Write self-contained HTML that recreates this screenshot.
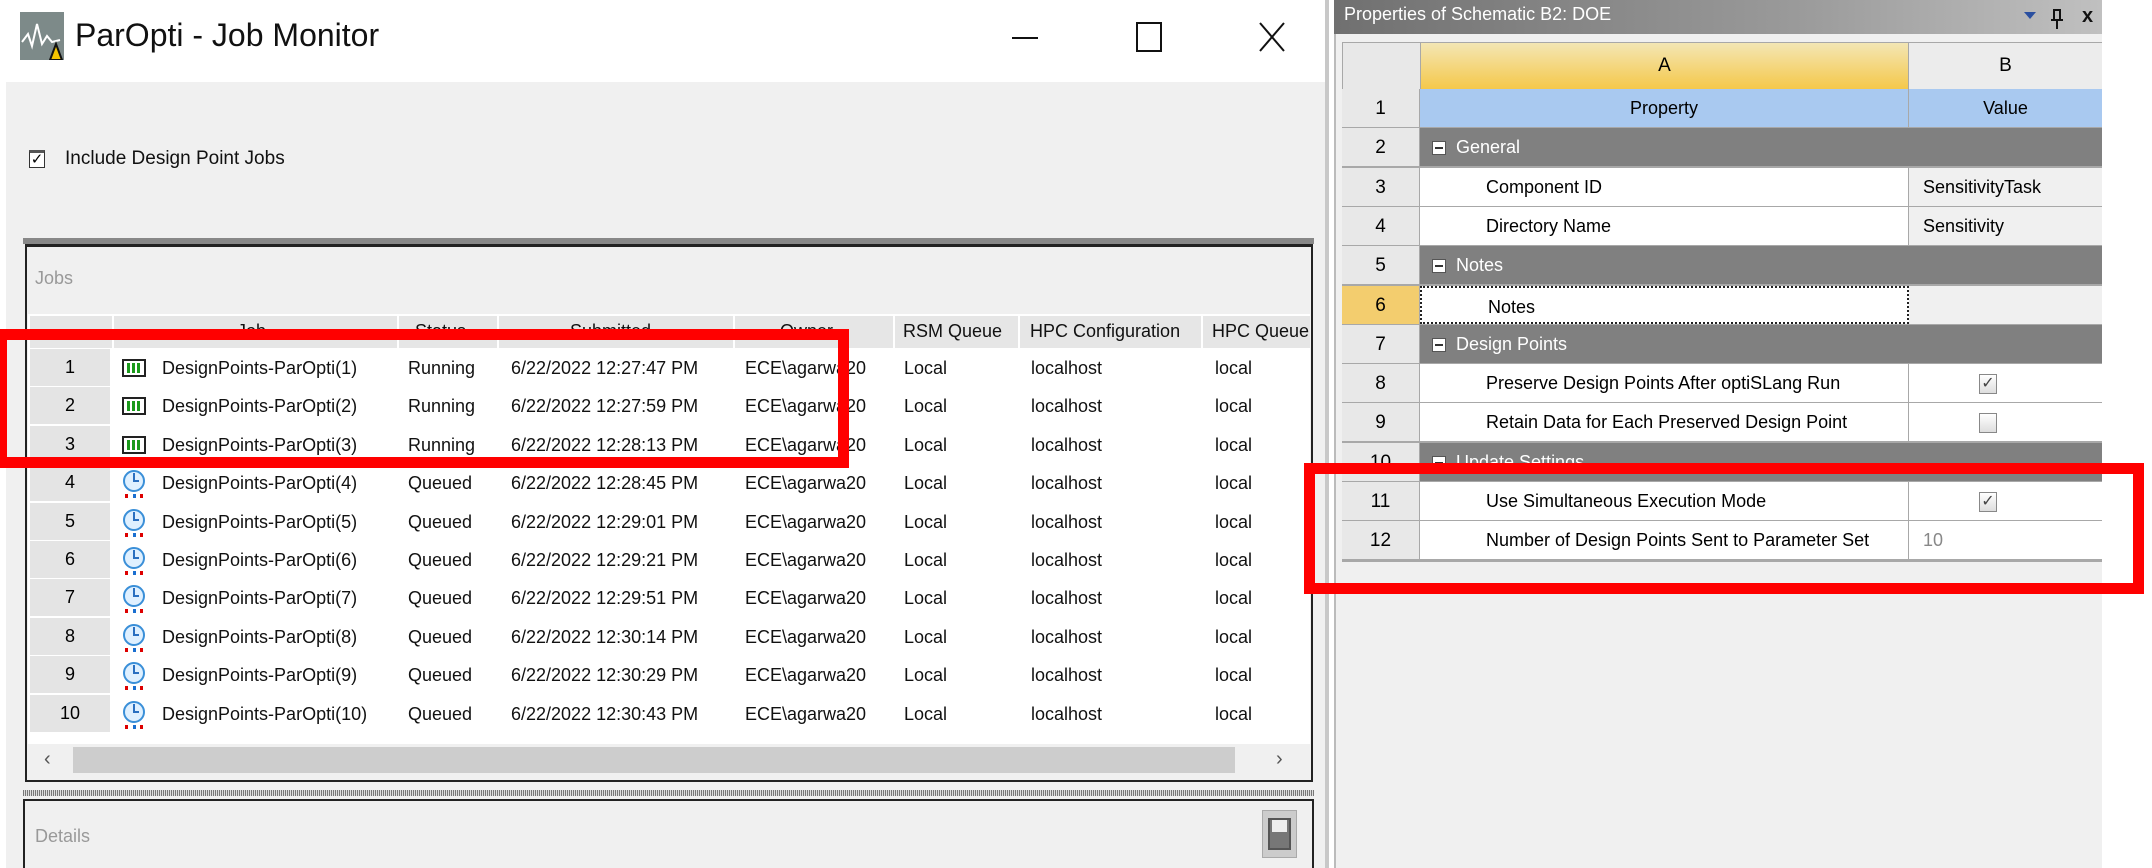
<!DOCTYPE html>
<html><head><meta charset="utf-8"><style>
*{margin:0;padding:0;box-sizing:border-box}
body{width:2152px;height:868px;overflow:hidden;background:#fff;font-family:"Liberation Sans",sans-serif;position:relative}
.a{position:absolute}
.t{position:absolute;font-size:18px;color:#111;white-space:nowrap;line-height:38px}
.rn{position:absolute;left:30px;width:80px;background:#e4e4e4;text-align:center;font-size:18px;line-height:37px;height:37px}
.pr{position:absolute;left:1342px;width:760px;height:39px;border-bottom:1px solid #a8a8a8}
.pr .n{position:absolute;left:0;width:78px;height:100%;background:#e8e8e8;border-right:1px solid #a8a8a8;text-align:center;font-size:19px;line-height:39px}
.pr .p{position:absolute;left:78px;width:489px;height:100%;background:#fff;border-right:1px solid #a8a8a8;font-size:18px;line-height:39px;padding-left:66px}
.pr .v{position:absolute;left:567px;right:0;height:100%;background:#fff;font-size:18px;line-height:39px;padding-left:14px}
.pr.g .p,.pr.g .v{background:#808080;color:#fff;border-right:none}
.pr.g .p{padding-left:36px}
.mb{position:absolute;left:12px;top:13px;width:14px;height:14px;background:#fff;border:1px solid #555}
.mb:after{content:"";position:absolute;left:2px;right:2px;top:5px;height:2px;background:#333}
.cb{position:absolute;left:70px;top:10px;width:18px;height:20px;border:1px solid #888;background:linear-gradient(#fff,#ddd);font-size:16px;line-height:18px;text-align:center;color:#444}
</style></head><body>
<div class="a" style="left:0;top:0;width:1328px;height:82px;background:#fff"></div>
<svg class="a" style="left:20px;top:12px" width="44" height="48"><rect width="44" height="48" fill="#7d8a89"/><polyline points="2,30 8,22 12,34 17,12 22,32 27,24 32,30 40,28" fill="none" stroke="#fff" stroke-width="2"/><polygon points="30,48 36,32 42,48" fill="#f5c400" stroke="#111" stroke-width="2"/></svg>
<div class="a" style="left:75px;top:17px;font-size:32px;color:#111">ParOpti - Job Monitor</div>
<div class="a" style="left:1012px;top:37px;width:26px;height:2px;background:#111"></div>
<div class="a" style="left:1136px;top:22px;width:26px;height:30px;border:2px solid #111"></div>
<svg class="a" style="left:1258px;top:22px" width="28" height="30"><path d="M2 1L26 29M26 1L2 29" stroke="#111" stroke-width="2"/></svg>
<div class="a" style="left:1325px;top:0;width:4px;height:868px;background:#c8c8c8"></div>
<div class="a" style="left:6px;top:82px;width:1319px;height:786px;background:#f0f0f0"></div>
<div class="a" style="left:29px;top:150px;width:16px;height:18px;border:1px solid #333;border-top:3px solid #555;background:#fff;font-size:15px;line-height:14px;text-align:center">✓</div>
<div class="a" style="left:65px;top:148px;font-size:19px;color:#111">Include Design Point Jobs</div>
<div class="a" style="left:23px;top:238px;width:1291px;height:6px;background:#888"></div>
<div class="a" style="left:25px;top:244px;width:1288px;height:538px;border:2px solid #222;border-top:3px solid #222;background:#f0f0f0"></div>
<div class="a" style="left:35px;top:268px;font-size:18px;color:#999">Jobs</div>
<div class="a" style="left:28px;top:314px;width:1282px;height:430px;background:#fff"></div>
<div class="a" style="left:30px;top:316px;width:1280px;height:32px;background:#e6e6e6"></div>
<div class="a" style="left:112px;top:316px;width:2px;height:32px;background:#fff"></div>
<div class="a" style="left:397px;top:316px;width:2px;height:32px;background:#fff"></div>
<div class="a" style="left:497px;top:316px;width:2px;height:32px;background:#fff"></div>
<div class="a" style="left:733px;top:316px;width:2px;height:32px;background:#fff"></div>
<div class="a" style="left:893px;top:316px;width:2px;height:32px;background:#fff"></div>
<div class="a" style="left:1018px;top:316px;width:2px;height:32px;background:#fff"></div>
<div class="a" style="left:1201px;top:316px;width:2px;height:32px;background:#fff"></div>
<div class="t" style="left:237px;top:314px;line-height:34px">Job</div>
<div class="t" style="left:415px;top:314px;line-height:34px">Status</div>
<div class="t" style="left:570px;top:314px;line-height:34px">Submitted</div>
<div class="t" style="left:780px;top:314px;line-height:34px">Owner</div>
<div class="t" style="left:903px;top:314px;line-height:34px">RSM Queue</div>
<div class="t" style="left:1030px;top:314px;line-height:34px">HPC Configuration</div>
<div class="t" style="left:1212px;top:314px;line-height:34px">HPC Queue</div>
<div id="rows"></div>
<div class="a" style="left:30px;top:745px;width:1280px;height:30px;background:#f0f0f0"></div>
<div class="a" style="left:73px;top:747px;width:1162px;height:26px;background:#cdcdcd"></div>
<div class="a" style="left:44px;top:748px;font-size:20px;color:#555">‹</div>
<div class="a" style="left:1276px;top:748px;font-size:20px;color:#555">›</div>
<div class="a" style="left:23px;top:790px;width:1291px;height:6px;background:repeating-linear-gradient(90deg,#777 0 1px,#ddd 1px 2px)"></div>
<div class="a" style="left:23px;top:799px;width:1291px;height:69px;border:2px solid #222;border-bottom:none;background:#f0f0f0"></div>
<div class="a" style="left:35px;top:826px;font-size:18px;color:#999">Details</div>
<div class="a" style="left:1262px;top:810px;width:35px;height:48px;background:#ccc;border:1px solid #aaa"></div>
<div class="a" style="left:1268px;top:818px;width:23px;height:32px;background:#777;border:2px solid #555"></div>
<div class="a" style="left:1272px;top:820px;width:15px;height:12px;background:#eee"></div>
<div class="a" style="left:1334px;top:0;width:768px;height:868px;background:#f0f0f0;border-left:2px solid #bbb"></div>
<div class="a" style="left:1334px;top:0;width:768px;height:34px;background:linear-gradient(90deg,#707070,#9a9a9a 60%,#c0c0c0)"></div>
<div class="a" style="left:1344px;top:4px;font-size:18px;color:#fff">Properties of Schematic B2: DOE</div>
<div class="a" style="left:2024px;top:12px;width:0;height:0;border-left:6px solid transparent;border-right:6px solid transparent;border-top:7px solid #2a4fa0"></div>
<svg class="a" style="left:2050px;top:8px" width="14" height="22"><path d="M3 2H11M4 2V12M10 2V12M1 12H13M7 12V21" stroke="#111" stroke-width="2" fill="none"/></svg>
<div class="a" style="left:2082px;top:5px;font-size:20px;font-weight:bold;color:#111">x</div>
<div class="a" style="left:1342px;top:42px;width:760px;height:520px;background:#a8a8a8"></div>
<div class="a" style="left:1343px;top:43px;width:77px;height:46px;background:#e8e8e8"></div>
<div class="a" style="left:1421px;top:43px;width:487px;height:46px;background:linear-gradient(#f3e6b4,#f5c84a);text-align:center;font-size:19px;line-height:46px">A</div>
<div class="a" style="left:1909px;top:43px;width:193px;height:46px;background:#ececec;text-align:center;font-size:19px;line-height:46px">B</div>
<div id="props"></div>
<div class="a" style="left:-4px;top:329px;width:853px;height:139px;border:11px solid #f00"></div>
<div class="a" style="left:1304px;top:463px;width:840px;height:131px;border:11px solid #f00"></div>
<script>
var rows=[["Running","12:27:47"],["Running","12:27:59"],["Running","12:28:13"],["Queued","12:28:45"],["Queued","12:29:01"],["Queued","12:29:21"],["Queued","12:29:51"],["Queued","12:30:14"],["Queued","12:30:29"],["Queued","12:30:43"]];
var h="";
rows.forEach(function(r,i){var y=349+i*38.4;
h+='<div class="rn" style="top:'+y+'px">'+(i+1)+'</div>';
if(r[0]=="Running")h+='<svg class="a" style="left:122px;top:'+(y+10)+'px" width="24" height="18"><rect x="1" y="1" width="22" height="16" fill="#fff" stroke="#222" stroke-width="2"/><rect x="5" y="4" width="3" height="10" fill="#1b9a1b"/><rect x="10" y="4" width="3" height="10" fill="#1b9a1b"/><rect x="15" y="4" width="3" height="10" fill="#1b9a1b"/></svg>';
else h+='<svg class="a" style="left:122px;top:'+(y+5)+'px" width="24" height="30"><circle cx="12" cy="12" r="10" fill="#dff0ff" stroke="#3a8fd8" stroke-width="2"/><path d="M12 4V12H17" stroke="#2a6fc0" stroke-width="2" fill="none"/><rect x="3" y="25" width="3" height="4" fill="#d00"/><rect x="11" y="25" width="3" height="4" fill="#1a6fd0"/><rect x="18" y="25" width="3" height="4" fill="#d00"/></svg>';
h+='<div class="t" style="left:162px;top:'+y+'px">DesignPoints-ParOpti('+(i+1)+')</div>';
h+='<div class="t" style="left:408px;top:'+y+'px">'+r[0]+'</div>';
h+='<div class="t" style="left:511px;top:'+y+'px">6/22/2022 '+r[1]+' PM</div>';
h+='<div class="t" style="left:745px;top:'+y+'px">ECE\\agarwa20</div>';
h+='<div class="t" style="left:904px;top:'+y+'px">Local</div>';
h+='<div class="t" style="left:1031px;top:'+y+'px">localhost</div>';
h+='<div class="t" style="left:1215px;top:'+y+'px">local</div>';});
document.getElementById("rows").innerHTML=h;
var P=[["Property","Value","hdr"],["General","","g"],["Component ID","SensitivityTask","x"],["Directory Name","Sensitivity","x"],["Notes","","g"],["Notes","","n"],["Design Points","","g"],["Preserve Design Points After optiSLang Run","c1",""],["Retain Data for Each Preserved Design Point","c0",""],["Update Settings","","g"],["Use Simultaneous Execution Mode","c1",""],["Number of Design Points Sent to Parameter Set","10","d"]];
var s="";
P.forEach(function(p,i){var y=89+i*39.3;var cls=p[2]=="g"?"pr g":"pr";
var n='<div class="n"'+(p[2]=="n"?' style="background:#f3cd6e"':'')+'>'+(i+1)+'</div>';
var ps='',vs='',v=p[1];
if(p[2]=="hdr"){ps=' style="background:#a9c9f0;padding:0;text-align:center"';vs=' style="background:#a9c9f0;padding:0;text-align:center"';}
if(p[2]=="x")vs=' style="background:#f0f0f0"';
if(p[2]=="n"){ps=' style="border:2px dotted #222"';vs=' style="background:#f0f0f0"';}
if(p[2]=="d")vs=' style="color:#888"';
var pt=p[0];if(p[2]=="g")pt='<span class="mb"></span>'+pt;
if(v=="c1")v='<span class="cb">✓</span>';else if(v=="c0")v='<span class="cb"></span>';
s+='<div class="'+cls+'" style="top:'+y+'px">'+n+'<div class="p"'+ps+'>'+pt+'</div><div class="v"'+vs+'>'+v+'</div></div>';});
document.getElementById("props").innerHTML=s;
</script>
</body></html>
